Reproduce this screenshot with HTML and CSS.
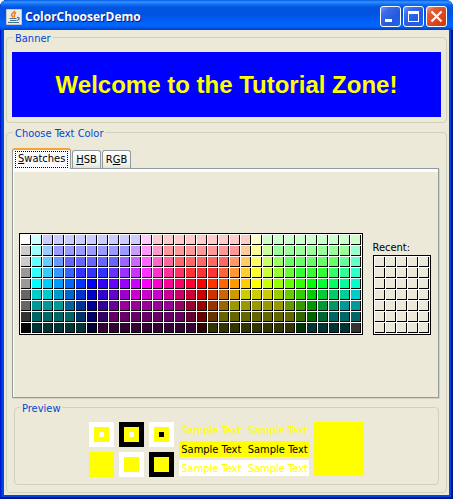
FILE: index.html
```html
<!DOCTYPE html>
<html lang="en">
<head>
<meta charset="utf-8">
<title>ColorChooserDemo</title>
<link rel="stylesheet" href="styles.css">
</head>
<body>
<div class="window">
  <header class="titlebar">
    <svg class="app-icon" width="16" height="16" viewBox="0 0 16 16" aria-hidden="true">
      <rect width="16" height="16" rx="1" fill="#c9c9c9"/>
      <rect x="1" y="1" width="14" height="14" fill="#ecebe8"/>
      <path d="M8.500 1.500C9.500 3 5 4 5.500 6C5.800 7 7 7.500 7 8.500M10 3.500C7 5 9.500 6 8 8.500" fill="none" stroke="#ee7a18" stroke-width="1.500"/>
      <path d="M3.500 9.500H10.500M4 11.500H10M11 8.500C14.500 8 13.500 11 10.500 11.500M2 13.500H13" fill="none" stroke="#48728f" stroke-width="1.200"/>
    </svg>
    <h1 class="title">ColorChooserDemo</h1>
    <div class="window-buttons">
      <button class="window-button" type="button" aria-label="Minimize">
        <svg width="19" height="19" viewBox="0 0 19 19"><path d="M4 12h7v3H4z" fill="#fff"/></svg>
      </button>
      <button class="window-button" type="button" aria-label="Maximize">
        <svg width="19" height="19" viewBox="0 0 19 19"><path fill-rule="evenodd" d="M4 4h11v11H4zM5 7v7h9V7z" fill="#fff"/></svg>
      </button>
      <button class="window-button window-button-close" type="button" aria-label="Close">
        <svg width="19" height="19" viewBox="0 0 19 19"><path d="M4.500 4.500l10 10M14.500 4.500l-10 10" stroke="#fff" stroke-width="2.200"/></svg>
      </button>
    </div>
  </header>
  <main class="content">
    <fieldset class="group">
      <legend>Banner</legend>
      <div class="banner">Welcome to the Tutorial Zone!</div>
    </fieldset>
    <fieldset class="group chooser">
      <legend>Choose Text Color</legend>
      <div class="tabs" role="tablist">
        <button class="tab tab-selected" type="button" role="tab" aria-selected="true"><span class="tab-label"><u>S</u>watches</span></button>
        <button class="tab" type="button" role="tab" aria-selected="false"><u>H</u>SB</button>
        <button class="tab" type="button" role="tab" aria-selected="false">R<u>G</u>B</button>
      </div>
      <div class="tab-panel" role="tabpanel">
        <div class="picker">
          <div class="swatches" id="swatches"></div>
          <div class="recent">
            <div class="recent-label">Recent:</div>
            <div class="swatches swatches-recent" id="recent"></div>
          </div>
        </div>
      </div>
      <fieldset class="group preview">
        <legend>Preview</legend>
        <div class="preview-row">
          <div class="squares">
            <div class="square on-white"><div class="inner"><div class="core core-white"></div></div></div>
            <div class="square on-black"><div class="inner"><div class="core core-white"></div></div></div>
            <div class="square on-white"><div class="inner"><div class="core core-black"></div></div></div>
            <div class="square on-yellow"></div>
            <div class="square on-white"><div class="inner"></div></div>
            <div class="square on-black"><div class="inner"></div></div>
          </div>
          <div class="samples">
            <div class="sample">Sample Text  Sample Text</div>
            <div class="sample sample-filled">Sample Text  Sample Text</div>
            <div class="sample sample-white">Sample Text  Sample Text</div>
          </div>
          <div class="current-color"></div>
        </div>
      </fieldset>
    </fieldset>
  </main>
</div>
<script src="swatches.js"></script>
</body>
</html>
```
FILE: swatches.js
```js
// Each row lists its colors from left to right; "color*n" repeats a color n times.
const rows = [
  "fff cff ccf*9 fcf fcc*9 ffc cfc*9",
  "ccc 9ff 9cf 99f*7 c9f f9f f9c f99*7 fc9 ff9 cf9 9f9*7 9fc",
  "ccc 6ff 6cf 69f 66f*5 96f c6f f6f f6c f69 f66*5 f96 fc6 ff6 cf6 9f6 6f6*5 6f9 6fc",
  "999 3ff 3cf 39f 36f 33f*3 63f 93f c3f f3f f3c f39 f36 f33*3 f63 f93 fc3 ff3 cf3 9f3 6f3 3f3*3 3f6 3f9 3fc",
  "999 0ff 0cf 09f 06f 03f 00f 30f 60f 90f c0f f0f f0c f09 f06 f03 f00 f30 f60 f90 fc0 ff0 cf0 9f0 6f0 3f0 0f0 0f3 0f6 0f9 0fc",
  "666 0cc*2 09c 06c 03c 00c 30c 60c 90c c0c*3 c09 c06 c03 c00 c30 c60 c90 cc0*3 9c0 6c0 3c0 0c0 0c3 0c6 0c9 0cc",
  "666 099*3 069 039 009 309 609 909*5 906 903 900 930 960 990*5 690 390 090 093 096 099*2",
  "333 066*4 036 006 306 606*7 603 600 630 660*7 360 060 063 066*3",
  "000 033*5 003 303*9 300 330*8 030 033*4 333"
];

function addSwatch(parent, color, label) {
  const button = document.createElement("button");
  button.type = "button";
  button.className = "swatch";
  button.setAttribute("aria-label", label);
  if (color) button.style.backgroundColor = color;
  parent.append(button);
}

const palette = document.getElementById("swatches");
for (const row of rows) {
  for (const entry of row.split(" ")) {
    const [color, count = 1] = entry.split("*");
    for (let i = 0; i < count; i++) addSwatch(palette, "#" + color, "#" + color);
  }
}

const recent = document.getElementById("recent");
for (let i = 0; i < 35; i++) addSwatch(recent, null, "Empty");
```
FILE: styles.css
```css
* {
  box-sizing: border-box;
}

body {
  margin: 0;
  background: #fff;
  color: #000;
  font-family: "DejaVu Sans Condensed", "Liberation Sans", sans-serif;
  font-size: 11px;
  line-height: 15px;
}

button {
  margin: 0;
  padding: 0;
  border: 0;
  font: inherit;
  color: inherit;
}

.window {
  display: flex;
  flex-direction: column;
  min-height: 100vh;
  padding: 0 4px 4px;
  border-radius: 7px 7px 0 0;
  background: #0046e0;
  box-shadow: inset 1px 0 #0019cf, inset -2px -2px #00138c, inset 2px 0 #0831d9;
}

.titlebar {
  display: flex;
  align-items: center;
  height: 30px;
  margin: 0 -4px;
  padding: 3px 6px 0;
  border-radius: 7px 7px 0 0;
  background: linear-gradient(#0058e6 0, #3a93ff 2px, #1273f8 4px, #0355e0 7px, #0054e3 14px, #005df5 20px, #0067ff 26px, #0053e0 28px, #003dd0 30px);
}

.app-icon {
  flex: none;
}

.title {
  flex: 1;
  margin: 0 0 0 3px;
  color: #fff;
  font-family: "Open Sans", sans-serif;
  font-size: 12px;
  font-weight: 700;
  text-shadow: 1px 1px #0a1883;
}

.window-buttons {
  display: flex;
  gap: 2px;
}

.window-button {
  width: 21px;
  height: 21px;
  border: 1px solid #fff;
  border-radius: 3px;
  background: linear-gradient(135deg, #7098f5 0, #3a6ce8 25%, #2459dd 65%, #1c68f0 100%);
}

.window-button svg {
  display: block;
}

.window-button-close {
  background: linear-gradient(135deg, #f0a088 0, #e35b36 25%, #d9441c 65%, #c83a10 100%);
}

.content {
  display: flex;
  flex: 1;
  flex-direction: column;
  gap: 2px;
  padding: 0 2px 2px;
  background: #ece9d8;
}

.group {
  min-width: 0;
  margin: 0;
  padding: 7px 5px 5px;
  border: 1px solid #d0d0bf;
  border-radius: 4px;
}

legend {
  height: 15px;
  margin-left: 1px;
  padding: 0 2px;
  color: #0046d5;
  line-height: 17px;
}

.banner {
  background: #00f;
  color: #ff0;
  font-family: "Liberation Sans", Arial, sans-serif;
  font-size: 24px;
  font-weight: 700;
  line-height: 65px;
  text-align: center;
}

.chooser {
  flex: 1;
  padding: 8px 7px 7px 5px;
}

.tabs {
  display: flex;
  align-items: flex-end;
  gap: 1px;
  height: 20px;
}

.tab {
  height: 18px;
  padding: 0 3px;
  border: 1px solid #919b9c;
  border-bottom: 0;
  border-radius: 3px 3px 0 0;
  background: linear-gradient(#fff, #f0f0ea 80%, #e4e1d0);
}

.tab-selected {
  position: relative;
  height: 21px;
  margin-bottom: -1px;
  padding: 0 2px;
  border-top: 2px solid #f5a32c;
  background: #fcfcfe;
}

.tab-label {
  display: block;
  height: 17px;
  padding: 0 2px;
  border: 1px dotted #000;
  line-height: 14px;
}

.tab-panel {
  display: flex;
  align-items: center;
  justify-content: center;
  min-height: calc(100vh - 269px);
  padding: 1px 2px 0 0;
  border: 1px solid #919b9c;
  box-shadow: inset 0 3px #fcfcfe, inset 1px 0 #fcfcfe, 1px 1px #d5d2c2;
}

.picker {
  display: flex;
  align-items: flex-end;
  gap: 10px;
}

.swatches {
  display: grid;
  grid-template-columns: repeat(31, 10px);
  gap: 1px;
  padding: 1px;
  border: 1px solid #000;
  background: #fff;
}

.swatches-recent {
  grid-template-columns: repeat(5, 10px);
}

.swatches,
.swatch {
  flex: none;
}

.swatch {
  height: 10px;
  border: solid #000;
  border-width: 0 1px 1px 0;
  background: #ece9d8;
}

.recent-label {
  line-height: 14px;
}

.preview {
  margin: 2px 0 0 2px;
  padding-bottom: 7px;
}

.preview legend {
  margin-left: 0;
}

.preview-row {
  display: flex;
  justify-content: center;
  gap: 5px;
}

.squares {
  display: grid;
  grid-template-columns: repeat(3, 25px);
  gap: 5px;
}

.square {
  display: grid;
  place-items: center;
  height: 25px;
}

.inner {
  display: grid;
  place-items: center;
  width: 15px;
  height: 15px;
  background: #ff0;
}

.core {
  width: 5px;
  height: 5px;
}

.on-white,
.core-white {
  background: #fff;
}

.on-black,
.core-black {
  background: #000;
}

.on-yellow {
  background: #ff0;
}

.samples {
  display: flex;
  flex-direction: column;
  gap: 3px;
}

.sample {
  height: 16px;
  padding: 0 1px 0 2px;
  color: #ff0;
  line-height: 18px;
  white-space: pre;
}

.sample-filled {
  background: #ff0;
  color: #000;
}

.sample-white {
  background: #fff;
}

.current-color {
  width: 50px;
  height: 54px;
  background: #ff0;
}
```
